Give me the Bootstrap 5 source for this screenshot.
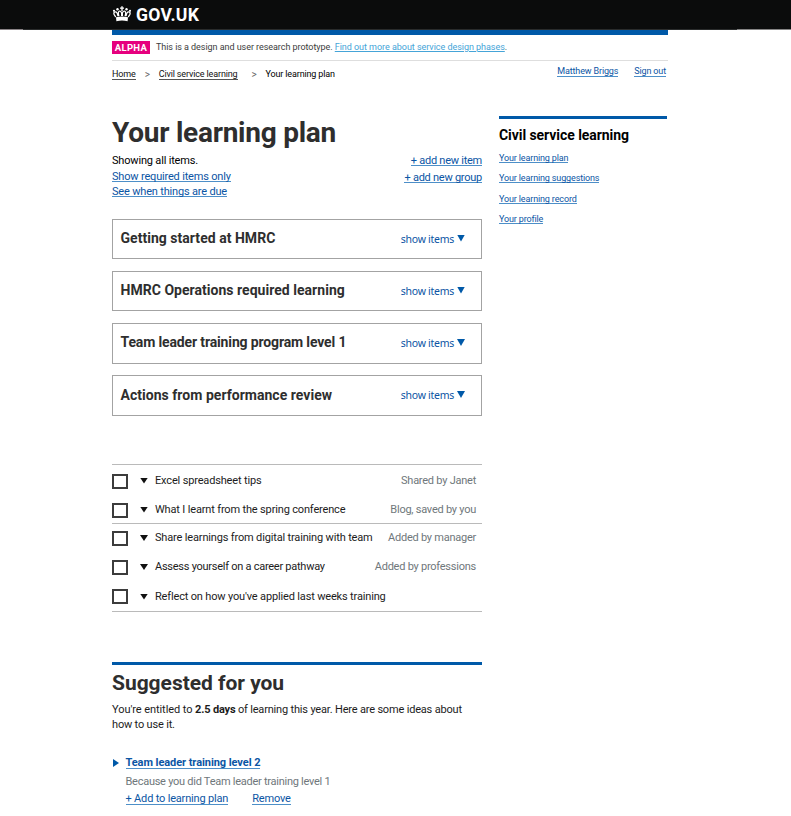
<!DOCTYPE html>
<html lang="en">
<head>
<meta charset="utf-8">
<title>Your learning plan - GOV.UK</title>
<meta name="viewport" content="width=device-width, initial-scale=1">
<link href="https://cdn.jsdelivr.net/npm/bootstrap@5.3.0/dist/css/bootstrap.min.css" rel="stylesheet">
<style>
:root{--gov-blue:#0059a8;--ink:#2e2e2e}
body{font-family:Roboto,"Liberation Sans",sans-serif;font-size:11px;line-height:15px;letter-spacing:-.18px;color:#1c1c1c;background:#fff;overflow:hidden}
h1,h2,h3,p,ul{margin:0}
a{color:#0b55a4;text-decoration:none;white-space:nowrap}
.ul{display:inline-block;line-height:10px;border-bottom:1px solid #4d8fc8}
.topbar{height:30px;background:linear-gradient(90deg,#8a8487 23px,#2a2c2c 23px 737px,#858585 737px) left bottom/100% 1px no-repeat,#0b0c0c}
.wrap{width:556px;margin-left:112px}
.brand{font-size:17.6px;line-height:20px;letter-spacing:.3px;font-weight:700;color:#fff;padding-top:5px}
.bluebar{height:5px;background:var(--gov-blue)}
.phase{height:26px;border-bottom:1px solid #dedede;font-size:9px;letter-spacing:-.05px;color:#3c3c3c;padding-top:6px}
.phase-text{margin-left:6px;line-height:13px}
.phase a{color:#45a4d8;text-decoration:underline;text-underline-offset:1px;letter-spacing:-.04px}
.alpha{background:#e6007e;color:#fff;font-size:9.5px;line-height:13px;font-weight:700;letter-spacing:.3px;width:38px;height:13px;text-align:center}
.crumbs{height:55px;font-size:9px;line-height:11px;letter-spacing:-.14px;color:#000;padding-top:8px}
.crumbs nav .ul{color:#111;border-color:#555}
.sep{color:#666;font-size:10px;width:6px;margin:0 8px 0 9px}
.sep+.ul+.sep{margin-left:14px}
.user{margin-top:-3px;padding-right:2px}
.maincol{width:370px}
.sidecol{width:168px;margin-right:1px}
.title{font-size:28px;line-height:32px;font-weight:700;letter-spacing:-.25px;color:var(--ink);padding-top:1px}
.intro{margin-top:4px;height:66px;color:#000}
.intro .ul{line-height:8px;padding-top:2px}
.filters .ul{margin-top:4px}
.filters span+.ul{margin-top:3px}
.adders{padding-top:2px;gap:6px;letter-spacing:-.25px}
.groupbox{border:1px solid #a3a3a3;height:40px;padding:0 16px 2px 7.5px}
.groupbox+.groupbox{margin-top:12px}
.groupbox.tall{height:41px}
.groupbox.tall+.tall{margin-top:11px}
.groupbox h2{font-size:14px;line-height:18px;font-weight:700;letter-spacing:.03px;color:var(--ink);white-space:nowrap}
.groupbox h2.tight{letter-spacing:-.14px;margin-bottom:1px}
.toggle{font-family:"Noto Sans",Roboto,sans-serif;font-size:10.5px;letter-spacing:-.27px;padding-top:2px}
.tri-d{width:8px;height:6px;background:currentColor;clip-path:polygon(0 0,100% 0,50% 100%)}
.toggle .tri-d{margin:3px 0 0 3px;height:7px;background:var(--gov-blue)}
.tri-r{width:6px;height:8px;margin:3px 6.500px 0 1px;background:var(--gov-blue);clip-path:polygon(0 0,100% 50%,0 100%)}
.tasks{margin-top:48px;border-bottom:1px solid #bababa}
.task{height:29px;padding-right:6px;white-space:nowrap;letter-spacing:-.16px}
.t1{height:31px}
.t2{height:27px}
.t1 .box,.t2 .box{margin-top:2px}
.t3 .lbl,.t3 .by,.t4 .lbl,.t4 .by{margin-bottom:2px}
.t3 .tri-d,.t4 .tri-d{margin-bottom:1px}
.task .lbl{margin-left:7px}
.rule{border-top:1px solid #bababa}
.box{width:16px;height:15px;border:2px solid #3c3c3c}
.by{color:#6f777b;margin-left:auto;letter-spacing:-.24px}
.task .tri-d{color:#111;margin-left:12px}
.tight2{letter-spacing:-.26px}
.suggest{margin-top:50px;border-top:3px solid var(--gov-blue)}
.suggest h2{font-size:21px;line-height:24px;font-weight:700;letter-spacing:-.03px;color:var(--ink);padding-top:6px;height:37px}
.suggest p{letter-spacing:-.18px}
.suggest p .lead-in{letter-spacing:-.07px}
.pick{margin-top:24px}
.pick .ul{line-height:10px;padding-top:2px}
.pick .fw-bold{letter-spacing:-.07px}
.why{color:#6f777b;margin:5px 0 3px}
.side{border-top:3px solid var(--gov-blue);padding-top:7px}
.side h3{font-size:14px;line-height:18px;font-weight:700;letter-spacing:-.06px;color:#000}
.side ul{font-size:9px;letter-spacing:-.14px;padding-top:9px}
.side li{height:20.4px;display:flex;align-items:flex-start}
.side .ul{line-height:7px;padding-top:2px}
</style>
</head>
<body>
<header class="topbar">
  <div class="wrap brand d-flex">
    <svg width="20" height="17" viewBox="0 0 20 17" fill="#fff" class="me-1">
      <path d="M4 12.3Q10 10.8 16 12.3L15.600 16.200Q10 15 4.400 16.200Z"/>
      <path d="M3.800 12Q1.200 9 2 7.500Q3.500 6 5 7.800L6 11.200M16.200 12Q18.800 9 18 7.500Q16.500 6 15 7.800L14 11.200M7 11Q5.500 7 7.500 6Q9 6 9.600 8V11M13 11Q14.500 7 12.500 6Q11 6 10.400 8V11" fill="none" stroke="#fff" stroke-width="1.2"/>
      <circle cx="2" cy="5.800" r="1.100"/><circle cx="18" cy="5.800" r="1.100"/><circle cx="5.500" cy="4.200" r="1.200"/><circle cx="14.500" cy="4.200" r="1.200"/>
      <path d="M9.300 1.200h1.400v1.300H12v1.300h-1.300V6H9.300V3.800H8V2.500h1.300z"/>
    </svg>
    <span>GOV.UK</span>
  </div>
</header>
<div class="wrap">
  <div class="bluebar"></div>
  <div class="phase d-flex">
    <span class="alpha">ALPHA</span>
    <span class="phase-text text-nowrap">This is a design and user research prototype. <a href="#">Find out more about service design phases</a>.</span>
  </div>
  <div class="crumbs d-flex justify-content-between align-items-start">
    <nav class="d-flex" aria-label="Breadcrumb">
      <a href="#" class="ul">Home</a><span class="sep">&gt;</span><a href="#" class="ul">Civil service learning</a><span class="sep">&gt;</span><span>Your learning plan</span>
    </nav>
    <div class="user d-flex gap-3"><a href="#" class="ul">Matthew Briggs</a><a href="#" class="ul">Sign out</a></div>
  </div>
  <div class="d-flex justify-content-between align-items-start">
    <main class="maincol">
      <h1 class="title">Your learning plan</h1>
      <div class="intro d-flex justify-content-between">
        <div class="filters d-flex flex-column align-items-start">
          <span>Showing all items.</span>
          <a href="#" class="ul">Show required items only</a>
          <a href="#" class="ul">See when things are due</a>
        </div>
        <div class="adders d-flex flex-column align-items-end">
          <a href="#" class="ul">+ add new item</a>
          <a href="#" class="ul">+ add new group</a>
        </div>
      </div>
      <section>
        <div class="groupbox d-flex align-items-center justify-content-between"><h2>Getting started at HMRC</h2><a href="#" class="toggle d-flex">show items<i class="tri-d"></i></a></div>
        <div class="groupbox d-flex align-items-center justify-content-between"><h2>HMRC Operations required learning</h2><a href="#" class="toggle d-flex">show items<i class="tri-d"></i></a></div>
        <div class="groupbox tall d-flex align-items-center justify-content-between"><h2 class="tight">Team leader training program level 1</h2><a href="#" class="toggle d-flex">show items<i class="tri-d"></i></a></div>
        <div class="groupbox tall d-flex align-items-center justify-content-between"><h2>Actions from performance review</h2><a href="#" class="toggle d-flex">show items<i class="tri-d"></i></a></div>
      </section>
      <section class="tasks">
        <div class="rule"></div>
        <div class="task t1 d-flex align-items-center"><span class="box"></span><i class="tri-d"></i><span class="lbl">Excel spreadsheet tips</span><span class="by">Shared by Janet</span></div>
        <div class="task t2 d-flex align-items-center"><span class="box"></span><i class="tri-d"></i><span class="lbl">What I learnt from the spring conference</span><span class="by">Blog, saved by you</span></div>
        <div class="rule"></div>
        <div class="task t3 d-flex align-items-center"><span class="box"></span><i class="tri-d"></i><span class="lbl">Share learnings from digital training with team</span><span class="by">Added by manager</span></div>
        <div class="task t4 d-flex align-items-center"><span class="box"></span><i class="tri-d"></i><span class="lbl tight2">Assess yourself on a career pathway</span><span class="by">Added by professions</span></div>
        <div class="task t5 d-flex align-items-center"><span class="box"></span><i class="tri-d"></i><span class="lbl">Reflect on how you've applied last weeks training</span></div>
      </section>
      <section class="suggest">
        <h2>Suggested for you</h2>
        <p><span class="lead-in">You're entitled to </span><b>2.5 days</b> of learning this year. Here are some ideas about<br>how to use it.</p>
        <div class="pick d-flex">
          <i class="tri-r"></i>
          <div class="d-flex flex-column align-items-start">
            <a href="#" class="ul fw-bold">Team leader training level 2</a>
            <div class="why tight2">Because you did Team leader training level 1</div>
            <div class="d-flex gap-4"><a href="#" class="ul">+ Add to learning plan</a><a href="#" class="ul">Remove</a></div>
          </div>
        </div>
      </section>
    </main>
    <aside class="sidecol side">
      <h3>Civil service learning</h3>
      <ul class="list-unstyled">
        <li><a href="#" class="ul">Your learning plan</a></li>
        <li><a href="#" class="ul">Your learning suggestions</a></li>
        <li><a href="#" class="ul">Your learning record</a></li>
        <li><a href="#" class="ul">Your profile</a></li>
      </ul>
    </aside>
  </div>
</div>
</body>
</html>
